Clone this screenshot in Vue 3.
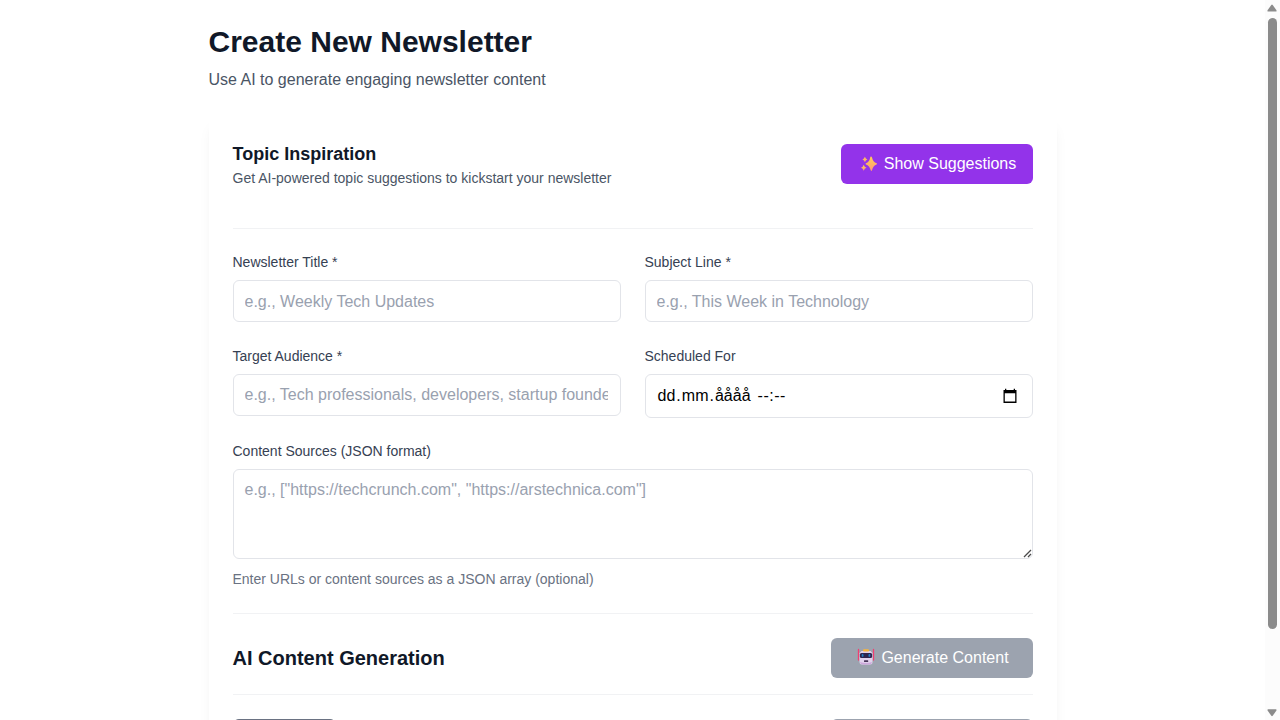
<script setup>
const fields = [
  { label: 'Newsletter Title *', placeholder: 'e.g., Weekly Tech Updates' },
  { label: 'Subject Line *', placeholder: 'e.g., This Week in Technology' },
  { label: 'Target Audience *', placeholder: 'e.g., Tech professionals, developers, startup founders' },
]
const sourcesHint = 'e.g., ["https://techcrunch.com", "https://arstechnica.com"]'
</script>

<template>
  <div class="window">
    <main class="page">
      <div class="container">
        <h1>Create New Newsletter</h1>
        <p class="subtitle">Use AI to generate engaging newsletter content</p>
        <section class="card">
          <div class="topic">
            <div>
              <h3>Topic Inspiration</h3>
              <p class="small">Get AI-powered topic suggestions to kickstart your newsletter</p>
            </div>
            <button class="btn purple">
              <svg width="18" height="18" viewBox="0 0 18 18">
                <defs>
                  <linearGradient id="spark" x1="0" y1="0" x2="0" y2="1">
                    <stop offset="0" stop-color="#ffcf55" />
                    <stop offset="1" stop-color="#ff9a74" />
                  </linearGradient>
                </defs>
                <g fill="url(#spark)">
                  <path d="M11 1.500 Q11.700 1.500 12 2.600 Q13 7.100 16.600 8.300 Q17.500 8.800 16.600 9.400 Q13.100 10.600 12 15.300 Q11.600 16.500 10.700 15.300 Q9.600 10.800 5.900 9.500 Q5.100 8.900 5.900 8.300 Q9.400 7.200 10.200 2.600 Q10.400 1.500 11 1.500Z" />
                  <path d="M4.900 1.800 Q5.500 4 7.400 4.600 Q5.600 5.200 4.900 7.200 Q4.300 5.200 2.400 4.600 Q4.300 4 4.900 1.800Z" />
                  <path d="M3.700 9.800 Q4.500 12.100 6.500 12.700 Q4.400 13.400 3.700 15.800 Q3 13.400 1 12.700 Q3 12.100 3.700 9.800Z" />
                </g>
              </svg>
              <span>Show Suggestions</span>
            </button>
          </div>

          <div class="grid">
            <div v-for="f in fields" :key="f.label" class="field">
              <label>{{ f.label }}</label>
              <input type="text" :placeholder="f.placeholder" />
            </div>
            <div class="field">
              <label>Scheduled For</label>
              <div class="date">
                <span class="date-text"><span>dd</span><span class="dot">.</span><span>mm</span><span class="dot">.</span><span>åååå</span><span class="time">--:--</span></span>
                <svg width="16" height="16" viewBox="0 0 16 16">
                  <path d="M1.500 2h13v13h-13z M2.800 5.300v8.300h10.400v-8.300z" fill="#000" fill-rule="evenodd" />
                  <path d="M3 .8h1.300v2H3z M11.700 .8h1.300v2h-1.300z" fill="#000" />
                </svg>
              </div>
            </div>
          </div>

          <div class="sources">
            <label>Content Sources (JSON format)</label>
            <div class="area">
              <textarea rows="3" :placeholder="sourcesHint"></textarea>
              <svg class="grip" width="9" height="9" viewBox="0 0 9 9"><path d="M1 8 8 1M5 8 8 5" stroke="#4a4a4a" stroke-width="1.300" /></svg>
            </div>
            <p class="small hint">Enter URLs or content sources as a JSON array (optional)</p>
          </div>

          <div class="ai">
            <h2>AI Content Generation</h2>
            <button class="btn gray">
              <svg width="18" height="18" viewBox="0 0 18 18">
                <path d="M1.500 1.500v10.500M16.500 1.500v10.500" stroke="#f13f72" stroke-width="1.300" stroke-linecap="round" />
                <path d="M4.500 3h9l2 2v9q0 2.500-2.500 2.500H5Q2.500 16.500 2.500 14V5z" fill="#e2d3ed" />
                <path d="M3 14q6 2 12 0-.4 2.500-2.500 2.500h-7Q3.400 16.500 3 14z" fill="#cda9dc" />
                <rect x="6" y="1.200" width="6" height="2.300" rx="1" fill="#f9b73c" />
                <rect x="2.900" y="5" width="12.200" height="5" rx="1.500" fill="#30264f" />
                <rect x="4.700" y="6.100" width="1.800" height="2.700" rx=".9" fill="#2380c8" />
                <rect x="11.500" y="6.100" width="1.800" height="2.700" rx=".9" fill="#2380c8" />
                <rect x="7" y="12.300" width="4.200" height="1.700" rx=".5" fill="#463257" />
              </svg>
              <span>Generate Content</span>
            </button>
          </div>

          <div class="actions">
            <button class="action cancel" aria-label="Cancel"></button>
            <button class="action create" aria-label="Create"></button>
          </div>
        </section>
      </div>
    </main>
    <aside class="scrollbar">
      <svg width="15" height="18" viewBox="0 0 15 18"><path d="M7 4.500Q7.400 4.500 7.700 4.900L11.300 10Q12 11.500 10.800 11.500H3.200Q2 11.500 2.700 10L6.300 4.900Q6.600 4.500 7 4.500Z" fill="#8b8b8b" /></svg>
      <div class="thumb"></div>
      <svg width="15" height="18" viewBox="0 0 15 18"><path d="M7 14.200Q7.400 14.200 7.700 13.800L11.300 8.700Q12 7.200 10.800 7.200H3.200Q2 7.200 2.700 8.700L6.300 13.800Q6.600 14.200 7 14.200Z" fill="#8b8b8b" /></svg>
    </aside>
  </div>
</template>

<style>
body { background: #fff; overflow: hidden; }
</style>

<style scoped>
* { box-sizing: border-box; margin: 0; }
.window { display: flex; width: 1280px; height: 720px; overflow: hidden; font: 16px/24px "Liberation Sans", Arial, sans-serif; color: #101828; }
.page { width: 1265px; height: 720px; overflow: hidden; }
.container { width: 896px; margin: 0 auto; padding: 24px; }
h1 { font-size: 30px; line-height: 36px; font-weight: 700; }
.subtitle { margin-top: 8px; color: #4a5565; }
.card { margin-top: 24px; padding: 24px; height: 720px; border-radius: 8px; background: #fff; box-shadow: 0 10px 15px -3px rgba(0, 0, 0, .06), 0 4px 6px -4px rgba(0, 0, 0, .05); }
.topic { display: flex; justify-content: space-between; align-items: center; height: 89px; padding-bottom: 40px; border-bottom: 1px solid #f1f2f4; }
h3 { font-size: 18px; line-height: 28px; font-weight: 700; }
.small { font-size: 14px; line-height: 20px; color: #4a5565; }
.btn { display: flex; align-items: center; justify-content: center; gap: 6px; height: 40px; border: 0; border-radius: 6px; color: #fff; font: inherit; padding: 0 0 0 3px; }
.purple { width: 192px; background: #9333ea; }
.gray { width: 202px; background: #9ca3af; }
.gray svg { position: relative; top: -1px; }
.grid { display: grid; grid-template-columns: 1fr 1fr; column-gap: 24px; row-gap: 24px; margin-top: 23px; }
label { display: block; font-size: 14px; line-height: 20px; margin-bottom: 8px; color: #364153; }
input, textarea, .date { display: block; width: 100%; height: 42px; border: 1px solid #e2e4e9; border-radius: 6px; padding: 8px 12px 8px 11px; background: #fff; font: inherit; color: #101828; outline: 0; }
.field:nth-child(-n+2) input { padding-top: 9px; padding-bottom: 7px; }
input::placeholder, textarea::placeholder { color: #99a1af; opacity: 1; }
.date { display: flex; align-items: center; justify-content: space-between; height: 44px; padding-left: 12px; padding-right: 14px; color: #000; }
.date-text { display: flex; }
.dot { width: 6.5px; text-align: center; }
.time { margin-left: 7px; letter-spacing: .5px; }
.sources { margin-top: 23px; }
.area { position: relative; }
textarea { height: 90px; resize: none; }
.grip { position: absolute; right: 1px; bottom: 1px; }
.hint { margin-top: 10px; color: #6a7282; }
.ai { display: flex; align-items: center; justify-content: space-between; height: 82px; margin-top: 24px; border-top: 1px solid #f1f2f4; border-bottom: 1px solid #f1f2f4; padding: 24px 0 16px; }
h2 { font-size: 20px; line-height: 28px; font-weight: 700; }
.actions { display: flex; justify-content: space-between; margin-top: 23.5px; }
.action { height: 42px; border: 0; border-radius: 6px; }
.cancel { width: 103px; background: #6a7282; }
.create { width: 202px; background: #9ca3af; }
.scrollbar { width: 15px; height: 720px; background: #fcfcfc; display: flex; flex-direction: column; }
.thumb { width: 9px; height: 611px; margin: 0 0 73px 3px; border-radius: 5px; background: #8b8b8b; }
</style>
